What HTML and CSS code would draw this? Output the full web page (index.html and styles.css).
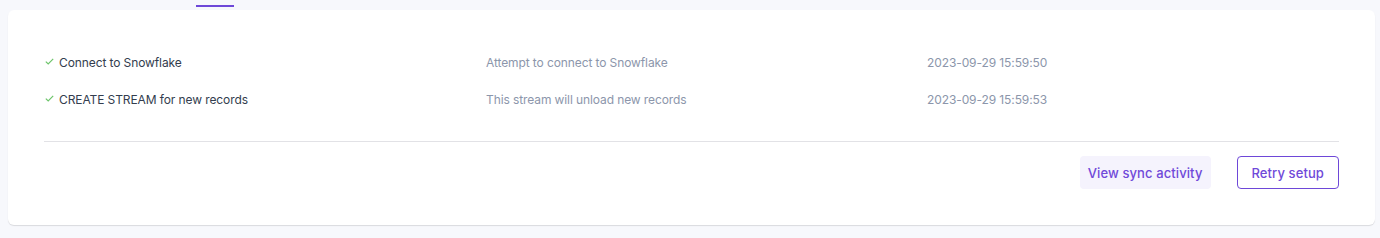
FILE: index.html
```html
<!DOCTYPE html>
<html lang="en">
<head>
    <title>Setup steps</title>
    <link rel="stylesheet" href="styles.css">
</head>
<body>

<div class="tabs">
    <div class="tab-line"></div>
</div>

<div class="card">
    <div class="steps">
        <div class="step">
            <div class="step-name">
                <svg class="check" width="9" height="7" viewBox="0 0 9 7"><polyline points="0.8,3.6 3.2,5.9 8.2,0.8" fill="none" stroke="#6cc46a" stroke-width="1.2"/></svg>
                Connect to Snowflake
            </div>
            <div class="step-desc">Attempt to connect to Snowflake</div>
            <div class="step-time">2023-09-29 15:59:50</div>
        </div>
        <div class="step">
            <div class="step-name">
                <svg class="check" width="9" height="7" viewBox="0 0 9 7"><polyline points="0.8,3.6 3.2,5.9 8.2,0.8" fill="none" stroke="#6cc46a" stroke-width="1.2"/></svg>
                CREATE STREAM for new records
            </div>
            <div class="step-desc">This stream will unload new records</div>
            <div class="step-time">2023-09-29 15:59:53</div>
        </div>
    </div>

    <div class="actions">
        <button class="btn btn-soft">View sync activity</button>
        <button class="btn btn-outline">Retry setup</button>
    </div>
</div>

</body>
</html>
```

FILE: styles.css
```css
body {
    font-family: Inter, "Noto Sans", sans-serif;
    margin: 0;
    padding: 0 5px 0 8px;
    background: #f7f8fc;
    height: 238px;
    overflow: hidden;
}
.tabs {
    height: 10px;
    padding-left: 188px;
    padding-top: 5px;
    box-sizing: border-box;
}
.tab-line {
    width: 38px;
    height: 2px;
    background: #6e48d8;
}
.card {
    background: #fff;
    border-radius: 6px;
    box-shadow: 0 1px 1px rgba(0, 0, 0, 0.12);
    height: 215px;
    box-sizing: border-box;
    padding: 34px 36px 0 36px;
}
.steps {
    border-bottom: 1px solid #e2e2e6;
    padding-bottom: 23px;
}
.step {
    display: flex;
    height: 37px;
    align-items: center;
    font-size: 12px;
    letter-spacing: -0.1px;
}
.step-name {
    width: 442px;
    color: #333d4e;
    display: flex;
    align-items: center;
}
.check {
    margin: -3px 5px 0 1px;
}
.step-desc {
    width: 441px;
    color: #8c96ab;
}
.step-time {
    color: #8c96ab;
}
.actions {
    display: flex;
    justify-content: flex-end;
    gap: 26px;
    padding-top: 14px;
}
.btn {
    font-family: Inter, "Noto Sans", sans-serif;
    font-size: 13px;
    font-weight: 500;
    height: 33px;
    padding: 0 8px;
    border-radius: 4px;
    color: #7049d9;
    cursor: pointer;
    letter-spacing: 0.1px;
}
.btn-soft {
    background: #f5f3fd;
    border: none;
}
.btn-outline {
    background: #fff;
    border: 1px solid #6e48d8;
    padding: 0 14px;
}
```
